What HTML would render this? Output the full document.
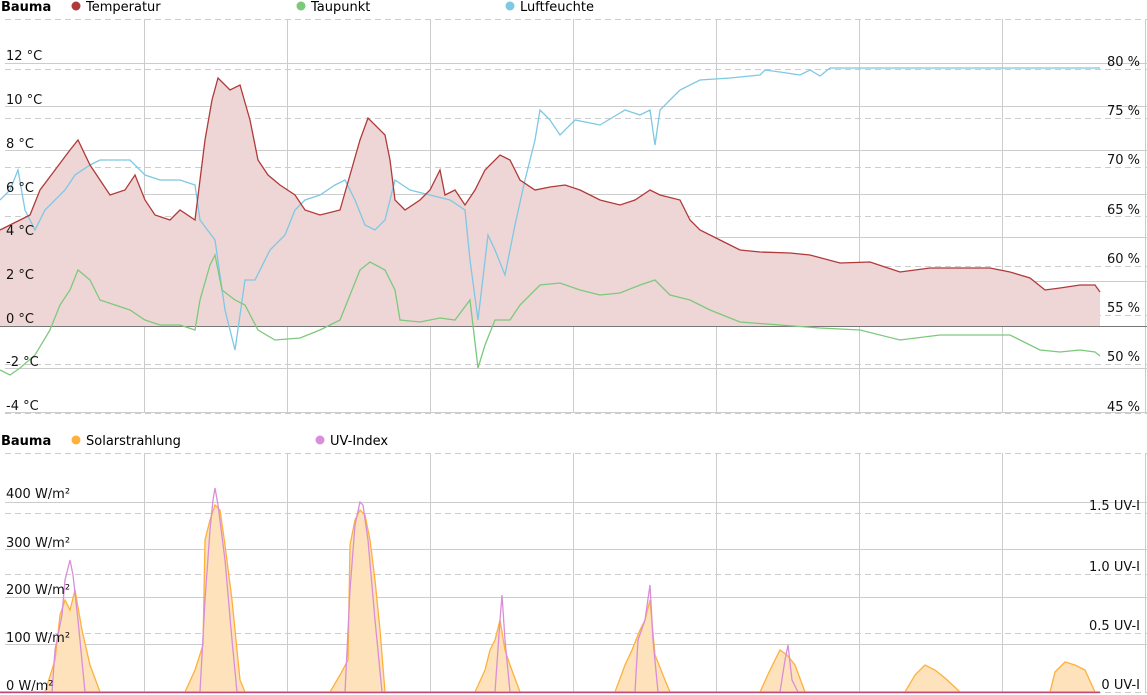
<!DOCTYPE html>
<html><head><meta charset="utf-8"><style>
html,body{margin:0;padding:0;background:#fff;width:1147px;height:695px;overflow:hidden}
svg{display:block;font-family:"DejaVu Sans","Liberation Sans",sans-serif;font-size:13px}
</style></head><body>
<svg width="1147" height="695" viewBox="0 0 1147 695">
<text x="1" y="11" font-weight="bold" fill="#000">Bauma</text>
<circle cx="76" cy="6" r="4.5" fill="#b03a3a"/><text x="86" y="11">Temperatur</text>
<circle cx="301" cy="6" r="4.5" fill="#7cc97c"/><text x="311" y="11">Taupunkt</text>
<circle cx="510" cy="6" r="4.5" fill="#7ec8e3"/><text x="520" y="11">Luftfeuchte</text>
<text x="1" y="445" font-weight="bold">Bauma</text>
<circle cx="76" cy="440" r="4.5" fill="#ffb03b"/><text x="86" y="445">Solarstrahlung</text>
<circle cx="320" cy="440" r="4.5" fill="#d98ed9"/><text x="330" y="445">UV-Index</text>

<g stroke="#ccc" stroke-width="1" fill="none">
<path d="M144.5 19V413M287.5 19V413M430.5 19V413M573.5 19V413M716.5 19V413M859.5 19V413M1002.5 19V413M1145.5 19V413"/>
<path d="M144.5 453V692M287.5 453V692M430.5 453V692M573.5 453V692M716.5 453V692M859.5 453V692M1002.5 453V692M1145.5 453V692"/>
<path d="M5 63.5H1147M5 106.5H1147M5 150.5H1147M5 194.5H1147M5 237.5H1147M5 281.5H1147M5 368.5H1147M5 412.5H1147"/>
<path d="M5 502.5H1147M5 549.5H1147M5 597.5H1147M5 644.5H1147"/>
</g>
<g stroke="#ccc" stroke-width="1" stroke-dasharray="6,4" fill="none">
<path d="M5 19.5H1147M5 69.5H1147M5 118.5H1147M5 167.5H1147M5 216.5H1147M5 266.5H1147M5 315.5H1147M5 364.5H1147M5 413.5H1147"/>
<path d="M5 453.5H1147M5 513.5H1147M5 574.5H1147M5 633.5H1147M5 692.5H1147"/>
</g>

<polygon fill="#eed6d6" points="0,326 0,230 10,225 20,220 30,215 40,190 55,170 70,150 78,140 90,165 100,180 110,195 125,190 135,175 145,200 155,215 170,220 180,210 195,220 200,180 205,140 212,100 218,78 222,82 230,90 240,85 250,120 258,160 268,175 280,185 295,195 305,210 320,215 340,210 350,175 360,140 368,118 375,125 385,135 390,160 395,200 405,210 420,200 430,190 440,170 445,195 455,190 465,205 475,190 485,170 500,155 510,160 520,180 535,190 550,187 565,185 580,190 600,200 620,205 635,200 650,190 660,195 680,200 690,220 700,230 720,240 740,250 760,252 790,253 810,255 840,263 870,262 900,272 930,268 960,268 990,268 1010,272 1030,278 1045,290 1060,288 1080,285 1095,285 1100,292 1100,326"/>
<path d="M0 326.5H1147" stroke="#777" stroke-width="1"/>
<polyline fill="none" stroke="#7ec8e3" stroke-width="1.3" points="0,200 10,190 18,170 25,210 35,230 45,210 55,200 65,190 75,175 90,165 100,160 115,160 130,160 145,175 160,180 180,180 195,185 200,220 215,240 225,310 235,350 245,280 255,280 270,250 285,235 295,210 305,200 320,195 335,185 345,180 355,200 365,225 375,230 385,220 395,180 410,190 430,195 450,200 465,210 470,260 478,320 488,235 495,250 505,275 515,225 525,180 535,140 540,110 550,120 560,135 575,120 600,125 625,110 640,115 650,110 655,145 660,110 670,100 680,90 700,80 730,78 760,75 765,70 780,72 800,75 810,70 820,76 830,68 1100,68"/>
<polyline fill="none" stroke="#7cc97c" stroke-width="1.3" points="0,370 10,375 20,368 35,355 50,330 60,305 70,290 78,270 90,280 100,300 115,305 130,310 145,320 160,325 180,325 195,330 200,300 210,265 215,255 222,290 235,300 245,305 258,330 275,340 300,338 320,330 340,320 350,295 360,270 370,262 385,270 395,290 400,320 420,322 440,318 455,320 470,300 478,368 485,345 495,320 510,320 520,305 540,285 560,283 580,290 600,295 620,293 640,285 655,280 670,295 690,300 710,310 740,322 780,325 820,328 860,330 900,340 940,335 980,335 1010,335 1040,350 1060,352 1080,350 1095,352 1100,356"/>
<polyline fill="none" stroke="#b03a3a" stroke-width="1.3" points="0,230 10,225 20,220 30,215 40,190 55,170 70,150 78,140 90,165 100,180 110,195 125,190 135,175 145,200 155,215 170,220 180,210 195,220 200,180 205,140 212,100 218,78 222,82 230,90 240,85 250,120 258,160 268,175 280,185 295,195 305,210 320,215 340,210 350,175 360,140 368,118 375,125 385,135 390,160 395,200 405,210 420,200 430,190 440,170 445,195 455,190 465,205 475,190 485,170 500,155 510,160 520,180 535,190 550,187 565,185 580,190 600,200 620,205 635,200 650,190 660,195 680,200 690,220 700,230 720,240 740,250 760,252 790,253 810,255 840,263 870,262 900,272 930,268 960,268 990,268 1010,272 1030,278 1045,290 1060,288 1080,285 1095,285 1100,292"/>

<polygon fill="#fde2bc" stroke="#ffb03b" stroke-width="1.3" points="0,692 45,692 55,660 60,615 65,600 70,610 75,590 82,630 90,665 100,692 185,692 195,670 203,645 205,540 210,520 215,505 220,510 225,545 232,600 240,680 245,692 330,692 340,675 348,660 350,545 355,520 360,510 365,515 370,540 375,580 380,630 385,692 475,692 485,670 490,650 495,640 500,620 505,650 510,665 520,692 615,692 625,665 632,650 640,630 645,620 650,600 655,655 665,680 670,692 760,692 770,670 780,650 787,655 795,665 805,692 905,692 915,675 925,665 935,670 945,678 960,692 1050,692 1055,672 1065,662 1075,665 1085,670 1095,692 1100,692"/>
<polyline fill="none" stroke="#d98ed9" stroke-width="1.3" points="0,692 52,692 55,650 62,615 65,580 70,560 73,575 78,620 85,692 200,692 205,600 210,530 213,500 215,488 218,505 225,560 232,640 237,692 345,692 350,590 355,525 360,502 363,505 368,540 375,620 382,692 495,692 500,620 502,595 505,640 510,692 635,692 638,640 645,620 650,585 653,640 658,692 780,692 785,660 788,645 792,680 798,692 1100,692"/>
<path d="M0 692.5H1100" stroke="#c04a7a" stroke-width="1.5"/>

<g fill="#111">
<text x="6" y="60">12 °C</text><text x="6" y="104">10 °C</text><text x="6" y="148">8 °C</text>
<text x="6" y="192">6 °C</text><text x="6" y="235">4 °C</text><text x="6" y="279">2 °C</text>
<text x="6" y="323">0 °C</text><text x="6" y="366">-2 °C</text><text x="6" y="410">-4 °C</text>
</g>
<g fill="#111" text-anchor="end">
<text x="1140" y="66">80 %</text><text x="1140" y="115">75 %</text><text x="1140" y="164">70 %</text>
<text x="1140" y="214">65 %</text><text x="1140" y="263">60 %</text><text x="1140" y="312">55 %</text>
<text x="1140" y="361">50 %</text><text x="1140" y="411">45 %</text>
<text x="1140" y="510">1.5 UV-I</text><text x="1140" y="571">1.0 UV-I</text>
<text x="1140" y="630">0.5 UV-I</text><text x="1140" y="689">0 UV-I</text>
</g>
<g fill="#111">
<text x="6" y="498">400 W/m²</text><text x="6" y="547">300 W/m²</text><text x="6" y="594">200 W/m²</text>
<text x="6" y="642">100 W/m²</text><text x="6" y="690">0 W/m²</text>
</g>
</svg>
</body></html>
